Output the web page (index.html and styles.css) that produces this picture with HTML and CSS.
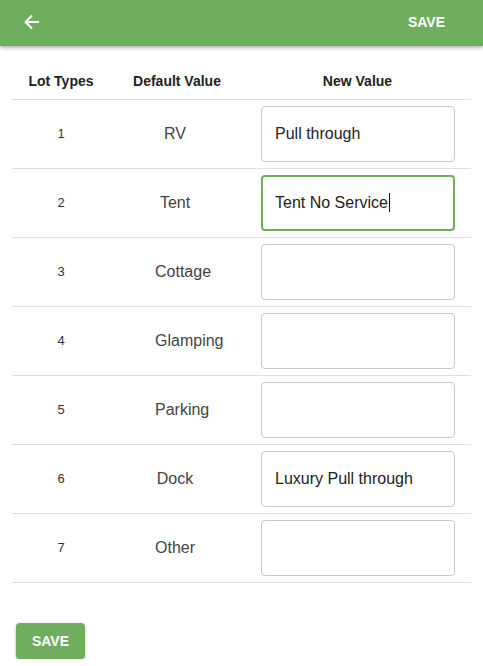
FILE: index.html
```html
<!DOCTYPE html>
<html>
<head>
<meta charset="utf-8">
<link rel="stylesheet" href="styles.css">
</head>
<body>
<header class="appbar">
  <button class="icon-btn" aria-label="Back">
    <svg width="16" height="16" viewBox="0 0 16 16"><path d="M15 8H2M8 1.5L1.5 8 8 14.5" fill="none" stroke="#fff" stroke-width="2"/></svg>
  </button>
  <button class="text-btn">SAVE</button>
</header>
<main class="content">
  <table class="lots">
    <thead>
      <tr><th class="c1">Lot Types</th><th class="c2">Default Value</th><th class="c3">New Value</th></tr>
    </thead>
    <tbody>
      <tr><td class="num">1</td><td class="def"><span>RV</span></td><td class="c3"><input class="field" value="Pull through"></td></tr>
      <tr><td class="num">2</td><td class="def"><span>Tent</span></td><td class="c3"><div class="field focus">Tent No Service<span class="caret"></span></div></td></tr>
      <tr><td class="num">3</td><td class="def"><span>Cottage</span></td><td class="c3"><input class="field" value=""></td></tr>
      <tr><td class="num">4</td><td class="def"><span>Glamping</span></td><td class="c3"><input class="field" value=""></td></tr>
      <tr><td class="num">5</td><td class="def"><span>Parking</span></td><td class="c3"><input class="field" value=""></td></tr>
      <tr><td class="num">6</td><td class="def"><span>Dock</span></td><td class="c3"><input class="field" value="Luxury Pull through"></td></tr>
      <tr><td class="num">7</td><td class="def"><span>Other</span></td><td class="c3"><input class="field" value=""></td></tr>
    </tbody>
  </table>
  <button class="save-btn">SAVE</button>
</main>
</body>
</html>
```
FILE: styles.css
```css
* { box-sizing: border-box; }
body {
  margin: 0;
  font-family: "Liberation Sans", Arial, sans-serif;
  background: #fff;
  color: #222;
}
.appbar {
  height: 46px;
  background: #6fae5e;
  display: flex;
  align-items: center;
  justify-content: space-between;
  padding: 0 24px 0 24px;
  box-shadow: 0 2px 4px rgba(0,0,0,0.3);
  position: relative;
}
.icon-btn {
  background: none;
  border: 0;
  padding: 0;
  width: 18px;
  height: 18px;
  display: flex;
  align-items: center;
  margin-top: -2px;
}
.text-btn {
  background: none;
  border: 0;
  color: #fff;
  font-family: inherit;
  font-weight: bold;
  font-size: 14px;
  padding: 0;
  margin-right: 14px;
  margin-top: -2px;
}
.content {
  padding: 17px 12px 0 12px;
}
.lots {
  width: 459px;
  border-collapse: collapse;
}
.lots th {
  height: 36px;
  font-size: 14px;
  font-weight: bold;
  color: #222;
  text-align: center;
  border-bottom: 1px solid #e0e0e0;
  padding: 0;
}
.c1 { width: 98px; }
.c2 { width: 134px; }
.lots td {
  height: 69px;
  border-bottom: 1px solid #e0e0e0;
  text-align: center;
  padding: 0;
}
.num { font-size: 13px; color: #333; }
.lots td.def {
  font-size: 16px;
  color: #444;
  text-align: left;
  padding-left: 45px;
}
.def span {
  display: inline-block;
  min-width: 40px;
  text-align: center;
}
.lots td.c3 {
  text-align: left;
  padding: 0 16px 0 17px;
}
.field {
  display: block;
  width: 194px;
  height: 56px;
  border: 1px solid #c8c8c8;
  border-radius: 4px;
  padding: 0 13px;
  font-family: inherit;
  font-size: 16px;
  color: #222;
  outline: none;
  background: #fff;
}
.field.focus {
  border: 2px solid #6fae5e;
  padding: 0 12px;
  display: flex;
  align-items: center;
}
.caret {
  display: inline-block;
  width: 1px;
  height: 19px;
  background: #111;
  margin-left: 1px;
}
.save-btn {
  margin-top: 40px;
  margin-left: 4px;
  width: 69px;
  height: 36px;
  background: #6fae5e;
  color: #fff;
  border: 0;
  border-radius: 4px;
  font-family: inherit;
  font-weight: bold;
  font-size: 14px;
  box-shadow: 0 1px 3px rgba(0,0,0,0.3);
}
```
